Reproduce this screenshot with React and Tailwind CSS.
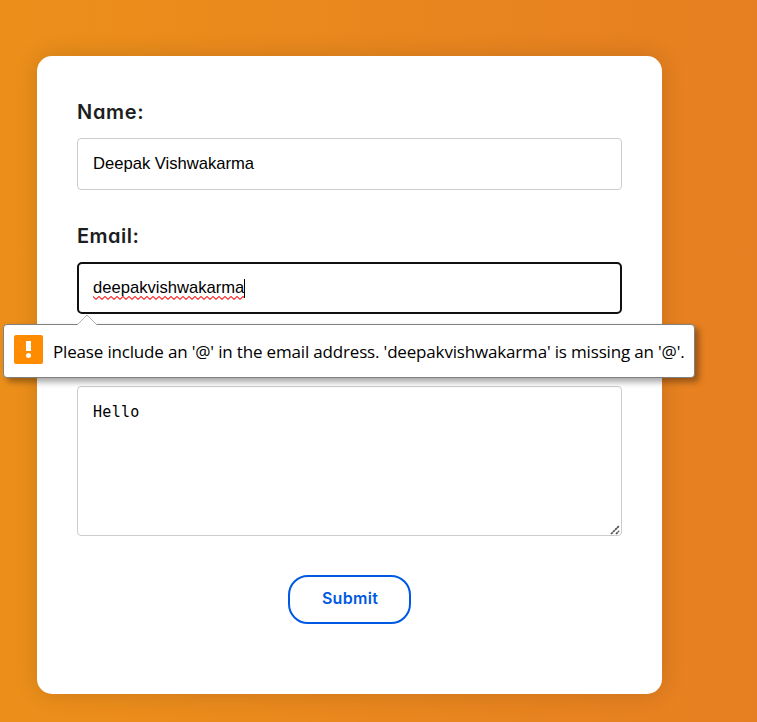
export default function App() {
  return (
    <main className="relative h-[722px] w-[757px] overflow-hidden bg-linear-to-r from-[#ec8f1a] to-[#e67f21] pt-14 pl-[37px] font-['Liberation_Sans',Arial,sans-serif] text-[16.6px] text-black">
      <form className="flex h-[638px] w-[625px] flex-col rounded-[15px] bg-white px-10 pt-10 shadow-[0_0_25px_rgba(0,0,0,0.14)]">
        <label className="h-[42px] font-['Inter',sans-serif] text-[20px] leading-8 font-semibold tracking-[0.7px] text-[#1c1e21] [font-feature-settings:'cv11']">
          Name:
        </label>
        <div className="flex h-[52px] items-center rounded-[4px] border border-[#ccc] px-[15px]">
          <span>Deepak Vishwakarma</span>
        </div>
        <label className="mt-[30px] h-[42px] font-['Inter',sans-serif] text-[20px] leading-8 font-semibold tracking-[0.5px] text-[#1c1e21] [font-feature-settings:'cv11']">
          Email:
        </label>
        <div className="flex h-[52px] items-center rounded-[5px] border-2 border-[#101010] px-[14px]">
          <span className="relative">
            deepakvishwakarma
            <svg className="absolute bottom-0 left-0" width="151" height="4" fill="none">
              <defs>
                <pattern id="squiggle" width="6" height="4" patternUnits="userSpaceOnUse">
                  <path d="M-1 1.5L0 0.5L3 3.3L6 0.5L7 1.5" stroke="#ff2020" strokeWidth="1.1" />
                </pattern>
              </defs>
              <rect width="151" height="4" fill="url(#squiggle)" />
            </svg>
          </span>
          <span className="h-[19px] w-px bg-black" />
        </div>
        <div className="mt-[72px] h-[150px] shrink-0 rounded-[4px] border border-[#ccc] px-[15px] pt-4">
          <div className="flex h-full flex-col justify-between">
            <span className="font-['DejaVu_Sans_Mono',monospace] text-[15px] leading-[19px] tracking-[0.3px]">Hello</span>
            <svg className="-mr-[14px] self-end" width="10" height="10" fill="none" stroke="#505050" strokeWidth="1.7">
              <path d="M1 9L9 1M6 9L9 6" strokeDasharray="2.4 0.5" />
            </svg>
          </div>
        </div>
        <button type="button" className="mt-[39px] flex h-[49px] w-[123px] items-center justify-center self-center rounded-[20px] border-2 border-[#0059e3] pb-[3px] pl-px font-['Inter',sans-serif] text-base font-semibold tracking-[0.3px] text-[#0059e3]">
          Submit
        </button>
      </form>
      <div role="alert" className="absolute top-[324px] left-[3px] flex h-[54px] w-[692px] items-center rounded-[4px] border border-[#808080] bg-white pl-[10px] shadow-[4px_4px_6px_rgba(0,0,0,0.35)]">
        <svg className="absolute -top-[11px] left-[72px]" width="22" height="12">
          <path d="M1 12V11L11 1L21 11V12Z" fill="white" />
          <path d="M1 11L11 1L21 11" fill="none" stroke="#b0b0b0" />
        </svg>
        <svg className="mb-[3px] shrink-0" width="29" height="29">
          <rect width="29" height="29" rx="2" fill="#ff8c00" />
          <path d="M12 6H17V16H12Z" fill="white" />
          <circle cx="14.5" cy="20.5" r="2.5" fill="white" />
        </svg>
        <span className="mt-px ml-[10px] font-['Open_Sans',sans-serif] text-[17px] tracking-[-0.17px] whitespace-nowrap">Please include an '@' in the email address. 'deepakvishwakarma' is missing an '@'.</span>
      </div>
    </main>
  );
}
